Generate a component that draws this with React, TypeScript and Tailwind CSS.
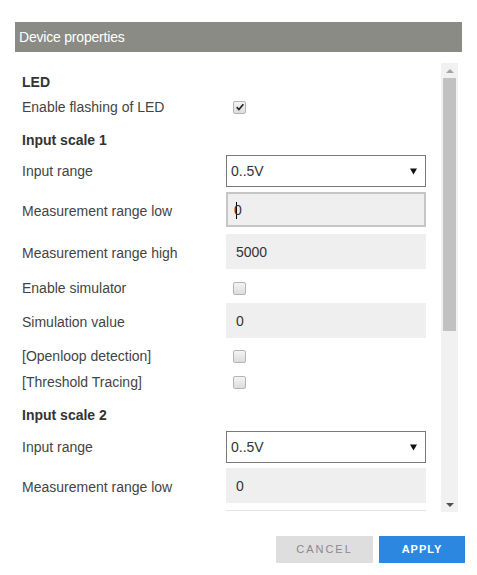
import { ReactNode } from "react";

function Heading({ children, className = "" }: { children: ReactNode; className?: string }) {
  return (
    <div className={`flex h-5 items-center text-[14px] font-bold text-[#333] ${className}`}>{children}</div>
  );
}

function Row({
  label,
  children,
  className = "",
  h = "h-[35px]",
  lift = "",
}: {
  label: string;
  children: ReactNode;
  className?: string;
  h?: string;
  lift?: string;
}) {
  return (
    <div className={`flex items-center ${h} ${className}`}>
      <div className={`w-[204px] shrink-0 text-[14px] text-[#444] ${lift}`}>{label}</div>
      <div className="flex w-[200px] items-center">{children}</div>
    </div>
  );
}

function Checkbox({ checked = false }: { checked?: boolean }) {
  return (
    <div className="ml-[7px] flex h-[13px] w-[13px] items-center justify-center rounded-[2px] border border-[#b5b5b5] bg-gradient-to-b from-[#f4f4f4] to-[#dcdcdc]">
      {checked && (
        <svg viewBox="0 0 12 12" className="h-[10px] w-[10px]">
          <path d="M2 6.2 L4.7 9 L10 2.8" fill="none" stroke="#222" strokeWidth="2" />
        </svg>
      )}
    </div>
  );
}

function TextBox({ value, focused = false }: { value: string; focused?: boolean }) {
  return (
    <div
      className={`flex h-[35px] w-full items-center bg-[#efefef] pt-[2px] text-[14px] text-[#333] ${
        focused ? "border-2 border-[#c6c6c6] pl-2" : "pl-[10px]"
      }`}
    >
      {focused && <span className="-mr-[3px] inline-block h-[17px] w-px bg-black" />}
      {value}
    </div>
  );
}

function SelectBox({ value }: { value: string }) {
  return (
    <div className="flex h-[32px] w-[200px] items-center justify-between border border-[#7a7a7a] bg-white pl-[4px] pr-[8px] pt-px text-[14px] text-[#333]">
      <span>{value}</span>
      <svg viewBox="0 0 8 7" className="h-[7px] w-[7px]">
        <path d="M0 0 H8 L4 7 Z" fill="#111" />
      </svg>
    </div>
  );
}

function Scrollbar() {
  return (
    <div className="mt-px flex h-[449px] w-[17px] shrink-0 flex-col items-center bg-[#f1f1f1]">
      <div className="flex h-[15px] w-full items-center justify-center">
        <svg viewBox="0 0 8 4" className="h-[4px] w-[8px]">
          <path d="M0 4 L4 0 L8 4 Z" fill="#a3a3a3" />
        </svg>
      </div>
      <div className="h-[253px] w-[13px] bg-[#c1c1c1]" />
      <div className="flex-1" />
      <div className="flex h-[15px] w-full items-center justify-center">
        <svg viewBox="0 0 8 4" className="h-[4px] w-[8px]">
          <path d="M0 0 L8 0 L4 4 Z" fill="#505050" />
        </svg>
      </div>
    </div>
  );
}

export default function App() {
  return (
    <div className="h-[575px] w-[477px] bg-white font-['Liberation_Sans',Arial,sans-serif]">
      <div className="ml-[15px] w-[447px] pt-[22px]">
        <div className="flex h-[30px] items-center bg-[#8b8b86] pl-[4px] text-[14px] tracking-[-0.2px] text-white">
          Device properties
        </div>
        <div className="mt-[10px] flex h-[450px]">
          <div className="w-[426px] shrink-0 overflow-hidden pl-[7px]">
            <Heading className="mt-[10px]">LED</Heading>
            <Row label="Enable flashing of LED" h="h-5" className="mt-[5px]">
              <Checkbox checked />
            </Row>
            <Heading className="mt-[13px]">Input scale 1</Heading>
            <Row label="Input range" h="h-[32px]" className="mt-[5px]">
              <SelectBox value="0..5V" />
            </Row>
            <Row label="Measurement range low" lift="pt-[3px]" className="mt-[5px]">
              <TextBox value="0" focused />
            </Row>
            <Row label="Measurement range high" lift="pt-[4px]" className="mt-[7px]">
              <TextBox value="5000" />
            </Row>
            <Row label="Enable simulator" h="h-6" className="mt-[7px]">
              <Checkbox />
            </Row>
            <Row label="Simulation value" lift="pt-[4px]" className="mt-[3px]">
              <TextBox value="0" />
            </Row>
            <Row label="[Openloop detection]" h="h-5" className="mt-[8px]">
              <Checkbox />
            </Row>
            <Row label="[Threshold Tracing]" h="h-5" className="mt-[6px]">
              <Checkbox />
            </Row>
            <Heading className="mt-[13px]">Input scale 2</Heading>
            <Row label="Input range" h="h-[32px]" className="mt-[6px]">
              <SelectBox value="0..5V" />
            </Row>
            <Row label="Measurement range low" lift="pt-[3px]" className="mt-[5px]">
              <TextBox value="0" />
            </Row>
            <div className="mt-[7px] flex h-[35px]">
              <div className="w-[204px] shrink-0" />
              <div className="h-[35px] w-[200px] border-t border-[#e4e4e4] bg-white" />
            </div>
          </div>
          <Scrollbar />
        </div>
        <div className="mt-[24px] flex justify-end gap-[6px]">
          <button className="h-[27px] w-[97px] bg-[#dedede] text-[11px] tracking-[2px] text-[#8a8a8a]">
            CANCEL
          </button>
          <button className="-mr-[3px] h-[27px] w-[86px] bg-[#2c87e0] text-[11px] font-bold tracking-[1px] text-white">
            APPLY
          </button>
        </div>
      </div>
    </div>
  );
}
